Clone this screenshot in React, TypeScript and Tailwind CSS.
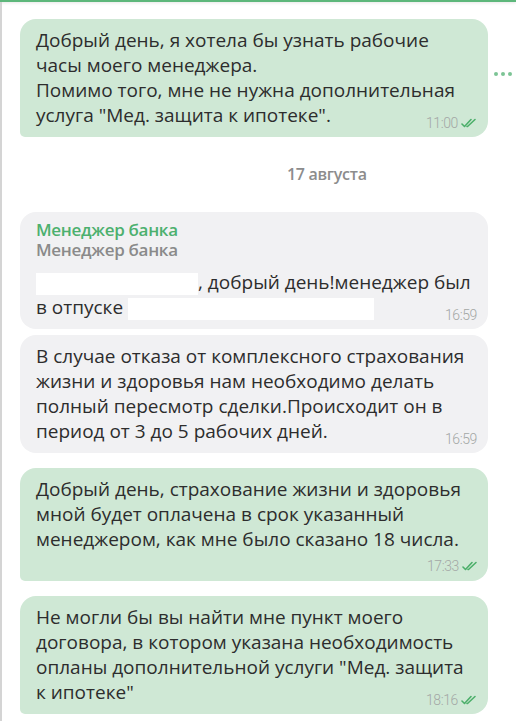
import React from "react";

function Checks() {
  return (
    <svg width="16" height="10" viewBox="0 0 16 10" className="inline-block ml-[3px]" fill="none" stroke="#4caf6a" strokeWidth="1.6" strokeLinecap="round" strokeLinejoin="round">
      <path d="M1 6 L3.5 8.5 L10 1.5" />
      <path d="M6 8.5 L6.5 8.5 L14 1.5" />
    </svg>
  );
}

function Time({ t, read }: { t: string; read?: boolean }) {
  return (
    <span className="flex items-center text-[14px] leading-none text-[#a3a7a5] font-['Roboto'] font-light tracking-[-0.4px]">
      {t}
      {read && <Checks />}
    </span>
  );
}

function Bubble({
  out,
  children,
  time,
  timeRow,
  header,
}: {
  out?: boolean;
  children: React.ReactNode;
  time: string;
  timeRow?: boolean;
  header?: React.ReactNode;
}) {
  return (
    <div
      className={`relative mx-[20px] w-[468px] rounded-[16px] ${out ? "rounded-bl-[5px] bg-[#cfe8d5]" : "bg-[#f1f1f3]"} pl-[16px] pr-[10px] pt-[9px] ${timeRow ? "pb-[8px]" : "pb-[9px]"}`}
    >
      {header}
      <div className="text-[19px] leading-[25px] text-[#2d2d2d] whitespace-pre-line">{children}</div>
      {timeRow ? (
        <div className="flex justify-end mt-[7px]">
          <Time t={time} read={out} />
        </div>
      ) : (
        <div className="absolute right-[11px] bottom-[7px]">
          <Time t={time} read={out} />
        </div>
      )}
    </div>
  );
}

export default function App() {
  return (
    <div className="relative w-[516px] h-[721px] overflow-hidden bg-white font-['Open_Sans',sans-serif]">
      <div className="h-[2px] bg-[#5db77b] shadow-[0_1px_3px_rgba(0,0,0,0.12)]" />
      <div className="absolute left-0 top-[2px] bottom-0 w-[2px] bg-[#d4d4d4]" />
      <div className="absolute right-[4px] top-[72px] flex gap-[3px]">
        <span className="w-[4px] h-[4px] rounded-full bg-[#7cc495]" />
        <span className="w-[4px] h-[4px] rounded-full bg-[#7cc495]" />
        <span className="w-[4px] h-[4px] rounded-full bg-[#7cc495]" />
      </div>

      <div className="pt-[17px]">
        <Bubble out time="11:00">
          {"Добрый день, я хотела бы узнать рабочие\nчасы моего менеджера.\nПомимо того, мне не нужна дополнительная\nуслуга \"Мед. защита к ипотеке\"."}
        </Bubble>

        <div className="h-[75px] flex items-center pl-[287px] pb-[2px]">
          <span className="text-[16px] font-semibold text-[#8c8c8c] tracking-[-0.3px]">17 августа</span>
        </div>

        <Bubble
          time="16:59"
          header={
            <div className="mb-[10px] -mt-[1px]">
              <div className="text-[17px] leading-[20px] font-semibold text-[#4cb06e] tracking-[-0.3px]">Менеджер банка</div>
              <div className="text-[17px] leading-[20px] font-semibold text-[#8a8a8a] tracking-[-0.3px]">Менеджер банка</div>
            </div>
          }
        >
          <span className="inline-block align-middle w-[162px] h-[22px] bg-white" />
          <span>, добрый день!менеджер был</span>
          {"\n"}
          <span>в отпуске </span>
          <span className="inline-block align-middle w-[246px] h-[22px] bg-white" />
        </Bubble>

        <div className="h-[6px]" />

        <Bubble time="16:59">
          {"В случае отказа от комплексного страхования\nжизни и здоровья нам необходимо делать\nполный пересмотр сделки.Происходит он в\nпериод от 3 до 5 рабочих дней."}
        </Bubble>

        <div className="h-[15px]" />

        <Bubble out time="17:33" timeRow>
          {"Добрый день, страхование жизни и здоровья\nмной будет оплачена в срок указанный\nменеджером, как мне было сказано 18 числа."}
        </Bubble>

        <div className="h-[15px]" />

        <Bubble out time="18:16">
          {"Не могли бы вы найти мне пункт моего\nдоговора, в котором указана необходимость\nопланы дополнительной услуги \"Мед. защита\nк ипотеке\""}
        </Bubble>
      </div>
    </div>
  );
}
